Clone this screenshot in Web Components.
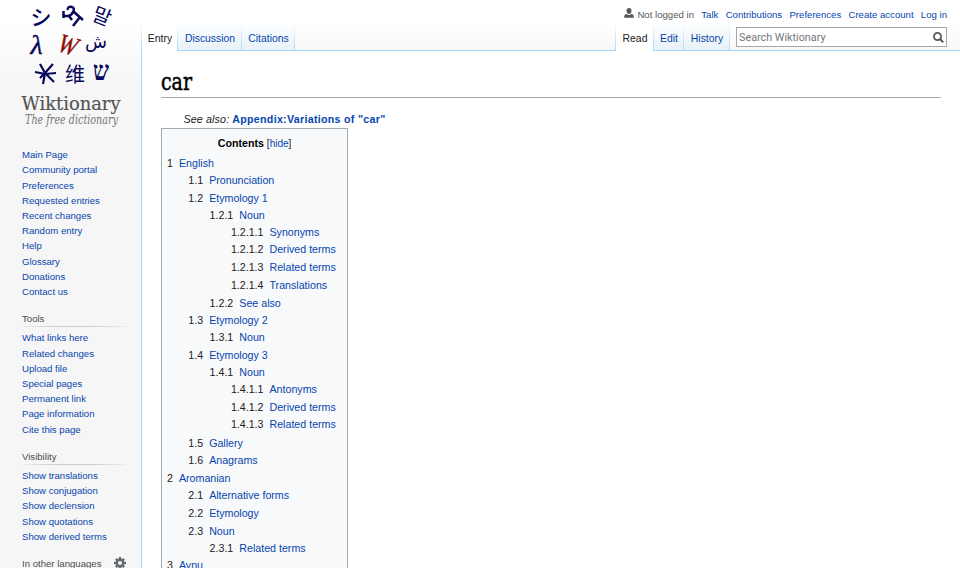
<!DOCTYPE html>
<html lang="en"><head><meta charset="utf-8"><title>car - Wiktionary</title>
<style>body{margin:0;font-family:"Liberation Sans",Arial,sans-serif;color:#202122;background:#fff;overflow:hidden}</style></head><body>
<wiki-page></wiki-page>
<script>
const define=(name,render)=>customElements.define(name,class extends HTMLElement{
  connectedCallback(){if(this.shadowRoot)return;this.attachShadow({mode:'open'}).innerHTML='<style>a{color:#0645ad;text-decoration:none}*{box-sizing:border-box}</style>'+render(this)}
});

define('wiki-logo',()=>`<style>:host{display:block;height:130px}svg{display:block}</style>
<svg width="141" height="130" viewBox="0 0 141 130">
<g fill="#06065a" text-anchor="middle">
<text x="41" y="25" font-size="21" font-weight="500" font-family="Noto Sans CJK JP,sans-serif">シ</text>
<g fill="none" stroke="#06065a" stroke-width="2.5"><path d="M63.500 11v7M63 16h5c5-1 8-8 4-9-3-1-5 1-4 3M69 16l3 4M74 12l9 8M80 17l-7 9"/></g>
<text x="102" y="23.500" font-size="20" transform="rotate(22 102 16)" font-family="Noto Sans CJK KR,sans-serif">말</text>
<text x="36.500" y="54" font-size="28" stroke="#06065a" stroke-width=".4" font-style="italic" font-family="Liberation Serif,serif">λ</text>
<text x="68" y="54" font-size="27" fill="#8c0b0b" textLength="19" lengthAdjust="spacingAndGlyphs" transform="rotate(18 68 45)" stroke="#8c0b0b" stroke-width=".4" font-style="italic" font-family="Liberation Serif,serif">W</text>
<text x="96" y="48" font-size="18" font-family="DejaVu Sans,sans-serif">ش</text>
<g fill="none" stroke="#06065a" stroke-width="2.2"><path d="M35 72l10 2 11-1M40 64l5 9M53 64l-8 9-5 5M45 73l-2 11M46 74l8 8"/></g>
<text x="75" y="82" font-size="20" font-family="Noto Sans CJK SC,sans-serif">维</text>
<text x="101" y="80" font-size="27" font-weight="bold" textLength="16" lengthAdjust="spacingAndGlyphs" font-family="Liberation Serif,DejaVu Sans,serif">ש</text></g>
<text x="21.500" y="110" font-size="19" fill="#555" textLength="99" lengthAdjust="spacingAndGlyphs" font-family="DejaVu Serif,serif" stroke="#555" stroke-width=".2">Wiktionary</text>
<text x="25" y="123.500" font-size="12.500" fill="#777" textLength="93" lengthAdjust="spacingAndGlyphs" font-style="italic" font-family="DejaVu Serif,serif">The free dictionary</text>
</svg>`);

define('nav-group',e=>`<style>:host{display:block;padding:0 15px 0 22px;font-size:9.6px}
h3{font-weight:400;font-size:9.6px;color:#4d4d4d;margin:0 0 3px 0;height:17px;line-height:17px;display:flex;justify-content:space-between;border-bottom:1px solid;border-image:linear-gradient(90deg,#eee,#ccc 33%,#ccc 66%,#eee) 1}
a{display:block;height:15.2px;line-height:15.2px;white-space:nowrap}</style>${e.getAttribute('heading')?`<h3>${e.getAttribute('heading')}<slot></slot></h3>`:''}${(e.getAttribute('items')||'').split('|').filter(Boolean).map(x=>`<a>${x}</a>`).join('')}`);

define('gear-icon',()=>`<style>:host{display:block;width:12px;height:12px;margin-top:2px}svg{display:block}</style><svg width="12" height="12" viewBox="-6 -6 12 12"><circle r="3.200" fill="none" stroke="#666b70" stroke-width="2.500"/><g stroke="#666b70" stroke-width="2.300"><path d="M0-6v2.500M0 6V3.500M-6 0h2.500M6 0H3.500M-4.100-4.100l1.600 1.600M4.100-4.100L2.500-2.500M-4.100 4.100l1.600-1.600M4.100 4.100L2.500 2.500"/></g></svg>`);

define('side-bar',()=>`<style>:host{display:flex;flex-direction:column;width:141px;height:568px;overflow:hidden;background:linear-gradient(#fff 20px,#f6f6f6 90px)}
.main{margin-top:17.300px}.tools,.vis,.lang{margin-top:11.300px}</style>
<wiki-logo></wiki-logo>
<nav-group class="main" items="Main Page|Community portal|Preferences|Requested entries|Recent changes|Random entry|Help|Glossary|Donations|Contact us"></nav-group>
<nav-group class="tools" heading="Tools" items="What links here|Related changes|Upload file|Special pages|Permanent link|Page information|Cite this page"></nav-group>
<nav-group class="vis" heading="Visibility" items="Show translations|Show conjugation|Show declension|Show quotations|Show derived terms"></nav-group>
<nav-group class="lang" heading="In other languages"><gear-icon></gear-icon></nav-group>`);

define('tab-strip',e=>`<style>:host{display:flex;height:28px;font-size:10.4px}
:host::before{content:"";width:1px;background:linear-gradient(#fff,#a7d7f9)}
span{display:flex;justify-content:center;padding:10px 0 0 1px;height:28px;line-height:14px;border-right:1px solid;border-image:linear-gradient(#fff,#a7d7f9) 1;border-width:0 1px 0 0;color:#0645ad;background:linear-gradient(#fff,#e8f2f8)}
.on{color:#202122;background:#fff;height:29px}</style>${e.getAttribute('tabs').split('|').map((t,i)=>{const [n,w]=t.split(':');return `<span class="${i?'':'on'}" style="width:${w}px">${n}</span>`}).join('')}`);

define('user-links',()=>`<style>:host{display:flex;justify-content:flex-end;height:22px;padding:9px 13px 0 0;font-size:9.6px;line-height:12px;gap:7.300px}
span{color:#54595d;display:flex;gap:3px}svg{margin-top:-1px}</style>
<span><svg width="10" height="11" viewBox="0 0 10 11"><path fill="#54595d" d="M5 0C3.200 0 2.500 1.200 2.500 2.800S3.500 6 5 6s2.500-1.600 2.500-3.200S6.800 0 5 0zM2.500 6C.8 6.300.2 7 .2 9.800h9.600C9.800 7 9.200 6.300 7.500 6 6 7.200 4 7.200 2.500 6z"/></svg>Not logged in</span><a>Talk</a><a>Contributions</a><a>Preferences</a><a>Create account</a><a>Log in</a>`);

define('search-box',()=>`<style>:host{display:flex;justify-content:space-between;align-items:center;width:211px;height:20px;border:1px solid #a2a9b1;background:#fff;color:#72777d;font:10.800px Roboto,sans-serif;padding:0 2px;box-sizing:border-box}</style><span>Search Wiktionary</span><svg width="11" height="11" viewBox="0 0 11 11" fill="none" stroke="#54595d"><circle cx="4.500" cy="4.500" r="3.600" stroke-width="1.700"/><path d="M7 7l3.200 3.200" stroke-width="2"/></svg>`);

define('page-head',()=>`<style>:host{display:block;height:51px;background:linear-gradient(#fff 50%,#f8f8f8);border-bottom:1px solid #a7d7f9;box-sizing:border-box}
.row{display:flex;height:28px}.sp{flex:1}search-box{margin:5px 13px 0 6px}</style><user-links></user-links><div class="row"><tab-strip tabs="Entry:36|Discussion:64|Citations:53"></tab-strip><div class="sp"></div><tab-strip tabs="Read:38|Edit:30|History:46"></tab-strip><search-box></search-box></div>`);

define('toc-row',e=>`<style>:host{display:flex;box-sizing:border-box;gap:6px;white-space:nowrap}</style><span>${e.getAttribute('num')}</span><a>${e.textContent}</a>`);

const toc=[[163,'1','English'],[180,'1.1','Pronunciation'],[198,'1.2','Etymology 1'],[215,'1.2.1','Noun'],[232,'1.2.1.1','Synonyms'],[249.5,'1.2.1.2','Derived terms'],[267,'1.2.1.3','Related terms'],[285,'1.2.1.4','Translations'],[303,'1.2.2','See also'],[320.5,'1.3','Etymology 2'],[337.5,'1.3.1','Noun'],[355.5,'1.4','Etymology 3'],[372.5,'1.4.1','Noun'],[389.5,'1.4.1.1','Antonyms'],[407,'1.4.1.2','Derived terms'],[424.5,'1.4.1.3','Related terms'],[443,'1.5','Gallery'],[460.5,'1.6','Anagrams'],[478,'2','Aromanian'],[495,'2.1','Alternative forms'],[513,'2.2','Etymology'],[531,'2.3','Noun'],[548,'2.3.1','Related terms'],[565,'3','Aynu']];
define('toc-box',()=>`<style>:host{display:block;width:187px;height:460px;box-sizing:border-box;border:1px solid #a2a9b1;background:#f8f9fa;padding:6px 5px;font-size:10.67px;line-height:16px}
.t{text-align:center;height:19.500px}b{color:#000}small{font-size:10px}</style><div class="t"><b>Contents</b> <small>[<a>hide</a>]</small></div>${toc.map(([y,n,t],i)=>`<toc-row num="${n}" style="height:${(toc[i+1]?.[0]??y+17)-y}px;padding-left:${(n.split('.').length-1)*21.3}px">${t}</toc-row>`).join('')}`);

define('entry-body',()=>`<style>:host{display:block;padding:0 19px}
svg{display:block}header{height:47px;border-bottom:1px solid #a2a9b1}p{margin:0;padding:13px 0 0 22.500px;height:30px;font-size:10.67px;line-height:16px}i{letter-spacing:.15px}b{letter-spacing:.29px}</style>
<header><svg width="60" height="45"><text x="0" y="39" font-size="23.500" textLength="31" lengthAdjust="spacingAndGlyphs" fill="#000" stroke="#000" stroke-width=".5" font-family="DejaVu Serif,serif">car</text></svg></header>
<p><i>See also:</i> <a><b>Appendix:Variations of "car"</b></a></p><toc-box></toc-box>`);

define('wiki-page',()=>`<style>:host{display:flex;width:960px;height:568px;overflow:hidden}main{flex:1;min-width:0}.c{height:517px;border-left:1px solid #a7d7f9}</style><side-bar></side-bar><main><page-head></page-head><div class="c"><entry-body></entry-body></div></main>`);
</script></body></html>
